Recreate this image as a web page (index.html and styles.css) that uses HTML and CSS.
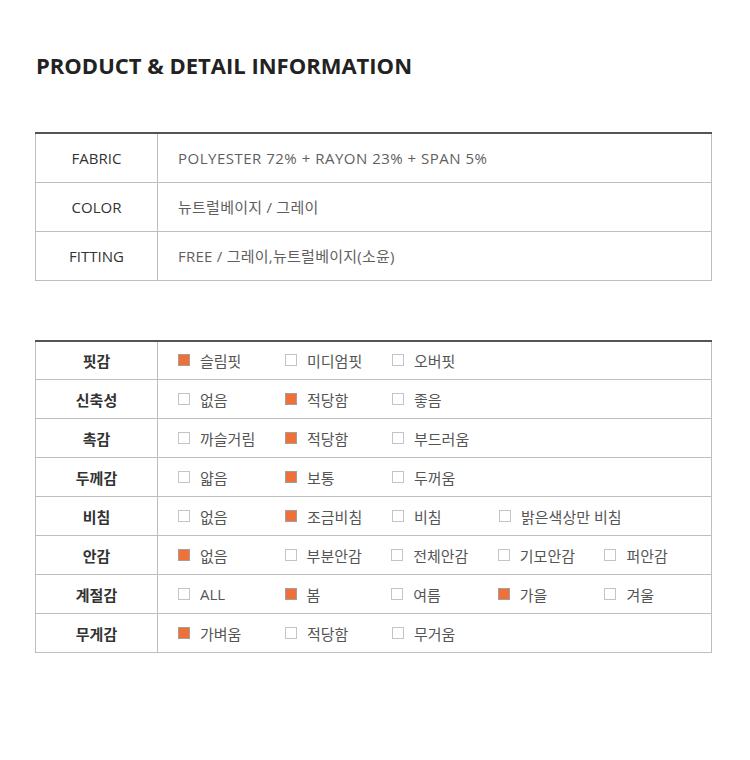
FILE: index.html
```html
<!DOCTYPE html>
<html lang="ko">
<head>
<meta charset="utf-8">
<title>Product &amp; Detail Information</title>
<link rel="stylesheet" href="styles.css">
</head>
<body>
<div class="page">
  <h1 class="title">PRODUCT &amp; DETAIL INFORMATION</h1>

  <table class="info">
    <tr><th>FABRIC</th><td class="latin">POLYESTER 72% + RAYON 23% + SPAN 5%</td></tr>
    <tr><th>COLOR</th><td>뉴트럴베이지 / 그레이</td></tr>
    <tr><th>FITTING</th><td>FREE / 그레이,뉴트럴베이지(소윤)</td></tr>
  </table>

  <table class="detail">
    <tr><th>핏감</th><td><div class="opts">
      <span class="opt"><i class="box on"></i>슬림핏</span>
      <span class="opt"><i class="box"></i>미디엄핏</span>
      <span class="opt"><i class="box"></i>오버핏</span>
    </div></td></tr>
    <tr><th>신축성</th><td><div class="opts">
      <span class="opt"><i class="box"></i>없음</span>
      <span class="opt"><i class="box on"></i>적당함</span>
      <span class="opt"><i class="box"></i>좋음</span>
    </div></td></tr>
    <tr><th>촉감</th><td><div class="opts">
      <span class="opt"><i class="box"></i>까슬거림</span>
      <span class="opt"><i class="box on"></i>적당함</span>
      <span class="opt"><i class="box"></i>부드러움</span>
    </div></td></tr>
    <tr><th>두께감</th><td><div class="opts">
      <span class="opt"><i class="box"></i>얇음</span>
      <span class="opt"><i class="box on"></i>보통</span>
      <span class="opt"><i class="box"></i>두꺼움</span>
    </div></td></tr>
    <tr><th>비침</th><td><div class="opts">
      <span class="opt"><i class="box"></i>없음</span>
      <span class="opt"><i class="box on"></i>조금비침</span>
      <span class="opt"><i class="box"></i>비침</span>
      <span class="opt"><i class="box"></i>밝은색상만 비침</span>
    </div></td></tr>
    <tr><th>안감</th><td><div class="opts">
      <span class="opt"><i class="box on"></i>없음</span>
      <span class="opt"><i class="box"></i>부분안감</span>
      <span class="opt"><i class="box"></i>전체안감</span>
      <span class="opt"><i class="box"></i>기모안감</span>
      <span class="opt"><i class="box"></i>퍼안감</span>
    </div></td></tr>
    <tr><th>계절감</th><td><div class="opts">
      <span class="opt"><i class="box"></i>ALL</span>
      <span class="opt"><i class="box on"></i>봄</span>
      <span class="opt"><i class="box"></i>여름</span>
      <span class="opt"><i class="box on"></i>가을</span>
      <span class="opt"><i class="box"></i>겨울</span>
    </div></td></tr>
    <tr><th>무게감</th><td><div class="opts">
      <span class="opt"><i class="box on"></i>가벼움</span>
      <span class="opt"><i class="box"></i>적당함</span>
      <span class="opt"><i class="box"></i>무거움</span>
    </div></td></tr>
  </table>
</div>
</body>
</html>
```

FILE: styles.css
```css
* { box-sizing: border-box; }
html, body { margin: 0; padding: 0; background: #fff; }
body {
  font-family: "Open Sans", "Noto Sans CJK KR", sans-serif;
  color: #333;
}
.page {
  width: 750px;
  padding: 48px 38px 0 35px;
}
.title {
  margin: 0 0 0 1px;
  font-size: 22px;
  line-height: 34px;
  font-weight: 700;
  color: #222;
  letter-spacing: 0;
}
table {
  width: 677px;
  border-collapse: collapse;
  table-layout: fixed;
}
th, td {
  border: 1px solid #bdbdbd;
  padding: 0;
}
tr:first-child th, tr:first-child td { border-top: 2px solid #555; }
th {
  width: 122px;
  text-align: center;
  font-weight: 400;
  color: #333;
}
td {
  padding-left: 20px;
  text-align: left;
  color: #5f5f5f;
}
.info { margin-top: 50px; font-size: 15px; }
.info th, .info td { height: 49px; }
.info td { letter-spacing: 0.25px; }
.info td.latin { letter-spacing: 0.5px; }
.detail { margin-top: 59px; font-size: 15px; }
.detail th { font-weight: 700; color: #333; }
.detail th, .detail td { height: 39px; }
.opts { display: flex; align-items: center; }
.opt {
  display: inline-flex;
  align-items: center;
  width: 107px;
  white-space: nowrap;
  color: #555;
}
.box {
  display: inline-block;
  width: 12px;
  height: 12px;
  border: 1px solid #c4c4c4;
  background: #fff;
  margin-right: 10px;
  flex: none;
}
.box.on { background: #f07038; border-color: #a0a0a0; }
```
